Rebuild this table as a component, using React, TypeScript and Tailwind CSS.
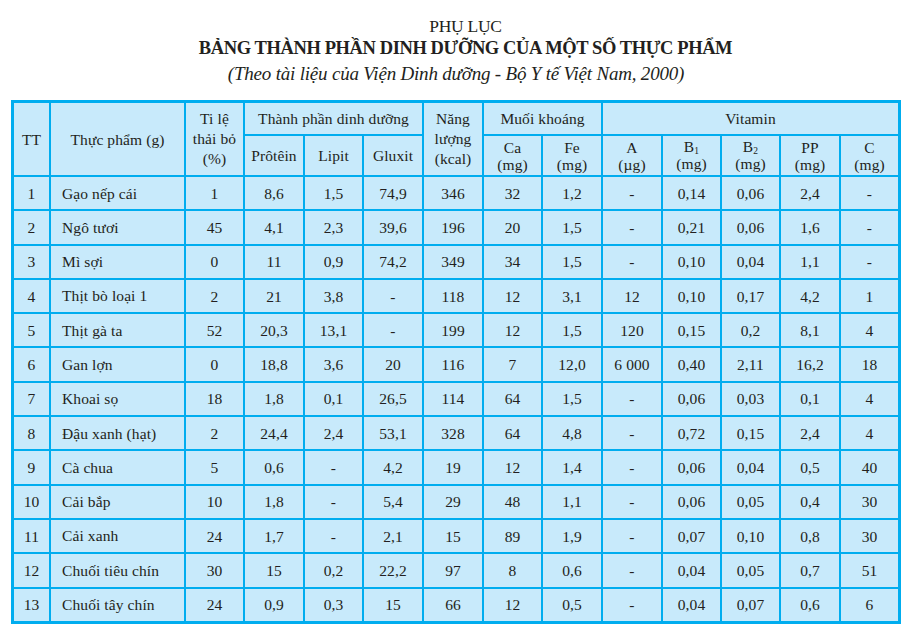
import React from 'react';

const rows: string[][] = [
  ['1', 'Gạo nếp cái', '1', '8,6', '1,5', '74,9', '346', '32', '1,2', '-', '0,14', '0,06', '2,4', '-'],
  ['2', 'Ngô tươi', '45', '4,1', '2,3', '39,6', '196', '20', '1,5', '-', '0,21', '0,06', '1,6', '-'],
  ['3', 'Mì sợi', '0', '11', '0,9', '74,2', '349', '34', '1,5', '-', '0,10', '0,04', '1,1', '-'],
  ['4', 'Thịt bò loại 1', '2', '21', '3,8', '-', '118', '12', '3,1', '12', '0,10', '0,17', '4,2', '1'],
  ['5', 'Thịt gà ta', '52', '20,3', '13,1', '-', '199', '12', '1,5', '120', '0,15', '0,2', '8,1', '4'],
  ['6', 'Gan lợn', '0', '18,8', '3,6', '20', '116', '7', '12,0', '6 000', '0,40', '2,11', '16,2', '18'],
  ['7', 'Khoai sọ', '18', '1,8', '0,1', '26,5', '114', '64', '1,5', '-', '0,06', '0,03', '0,1', '4'],
  ['8', 'Đậu xanh (hạt)', '2', '24,4', '2,4', '53,1', '328', '64', '4,8', '-', '0,72', '0,15', '2,4', '4'],
  ['9', 'Cà chua', '5', '0,6', '-', '4,2', '19', '12', '1,4', '-', '0,06', '0,04', '0,5', '40'],
  ['10', 'Cải bắp', '10', '1,8', '-', '5,4', '29', '48', '1,1', '-', '0,06', '0,05', '0,4', '30'],
  ['11', 'Cải xanh', '24', '1,7', '-', '2,1', '15', '89', '1,9', '-', '0,07', '0,10', '0,8', '30'],
  ['12', 'Chuối tiêu chín', '30', '15', '0,2', '22,2', '97', '8', '0,6', '-', '0,04', '0,05', '0,7', '51'],
  ['13', 'Chuối tây chín', '24', '0,9', '0,3', '15', '66', '12', '0,5', '-', '0,04', '0,07', '0,6', '6'],
];

const cell = 'bg-[#c8eafb] flex items-center justify-center text-center leading-[17px]';

function Sub({ base, idx }: { base: string; idx: string }) {
  return (
    <span className="leading-[15px]">
      {base}
      <span className="text-[9.5px] relative top-[2px] leading-none">{idx}</span>
    </span>
  );
}

export default function App() {
  return (
    <div
      className="w-[910px] h-[632px] bg-white text-[#231f20] overflow-hidden"
      style={{ fontFamily: '"Liberation Serif", "DejaVu Serif", serif' }}
    >
      <div className="pt-[15px] pl-[21px] flex flex-col items-center">
        <div className="text-[17.5px] leading-[22px] tracking-[-0.3px]">PHỤ LỤC</div>
        <div className="text-[18.5px] leading-[22px] font-bold tracking-[-0.4px]">
          BẢNG THÀNH PHẦN DINH DƯỠNG CỦA MỘT SỐ THỰC PHẨM
        </div>
      </div>
      <div className="pt-[3px] pl-[2px] flex justify-center text-[19px] leading-[24px] italic tracking-[-0.2px]">
        (Theo tài liệu của Viện Dinh dưỡng - Bộ Y tế Việt Nam, 2000)
      </div>

      <div className="mt-[14px] ml-[11px] w-[890px] bg-[#00adef] p-[3px] grid gap-[2px] grid-cols-[35px_133px_57px_58px_57px_58px_58px_57px_58px_58px_57px_57px_58px_57px] grid-rows-[31px_39px_repeat(13,32.3px)] text-[15.5px] tracking-[0.1px]">
        <div className={`${cell} row-span-2`}>TT</div>
        <div className={`${cell} row-span-2`}>Thực phẩm (g)</div>
        <div className={`${cell} row-span-2 flex-col leading-[20px]`}>
          <span>Ti lệ</span>
          <span>thải bỏ</span>
          <span>(%)</span>
        </div>
        <div className={`${cell} col-span-3`}>Thành phần dinh dưỡng</div>
        <div className={`${cell} row-span-2 flex-col leading-[20px]`}>
          <span>Năng</span>
          <span>lượng</span>
          <span>(kcal)</span>
        </div>
        <div className={`${cell} col-span-2`}>Muối khoáng</div>
        <div className={`${cell} col-span-5`}>Vitamin</div>

        <div className={cell}>Prôtêin</div>
        <div className={cell}>Lipit</div>
        <div className={cell}>Gluxit</div>
        <div className={`${cell} flex-col leading-[16px]`}>
          <span>Ca</span>
          <span>(mg)</span>
        </div>
        <div className={`${cell} flex-col leading-[16px]`}>
          <span>Fe</span>
          <span>(mg)</span>
        </div>
        <div className={`${cell} flex-col leading-[16px]`}>
          <span>A</span>
          <span>(µg)</span>
        </div>
        <div className={`${cell} flex-col leading-[16px]`}>
          <Sub base="B" idx="1" />
          <span className="mt-[1px]">(mg)</span>
        </div>
        <div className={`${cell} flex-col leading-[16px]`}>
          <Sub base="B" idx="2" />
          <span className="mt-[1px]">(mg)</span>
        </div>
        <div className={`${cell} flex-col leading-[16px]`}>
          <span>PP</span>
          <span>(mg)</span>
        </div>
        <div className={`${cell} flex-col leading-[16px]`}>
          <span>C</span>
          <span>(mg)</span>
        </div>

        {rows.map((r) =>
          r.map((v, i) => (
            <div
              key={`${r[0]}-${i}`}
              className={i === 1 ? 'bg-[#c8eafb] flex items-center pl-[11px]' : cell}
            >
              {v}
            </div>
          )),
        )}
      </div>
    </div>
  );
}
